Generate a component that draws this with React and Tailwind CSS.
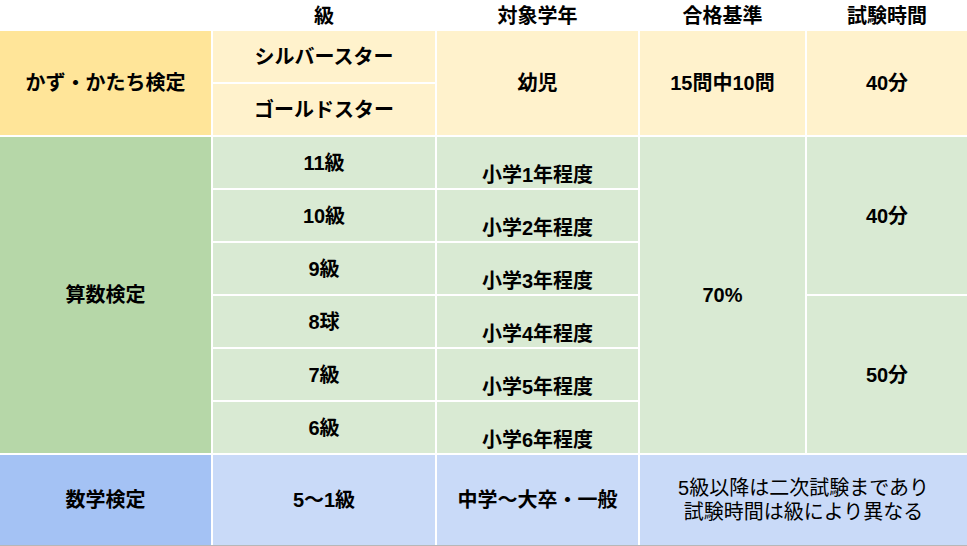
import React from "react";

const font = { fontFamily: '"Liberation Sans", "Noto Sans CJK JP", sans-serif' };

function Cell({ className = "", children }) {
  return (
    <div className={`flex items-center justify-center text-center text-[20px] leading-[24px] font-bold text-black ${className}`}>
      {children}
    </div>
  );
}

export default function App() {
  const grades = ["11級", "10級", "9級", "8球", "7級", "6級"];
  const rowStarts = [
    "row-start-4",
    "row-start-5",
    "row-start-6",
    "row-start-7",
    "row-start-8",
    "row-start-9",
  ];
  return (
    <div className="w-[967px] h-[546px] bg-white overflow-hidden" style={font}>
      <div className="border-b border-[#b7b7b7] bg-white">
        <div className="grid grid-cols-[211px_222px_201px_165px_160px] grid-rows-[29px_repeat(8,51px)_90px] gap-[2px] bg-white">
          {/* header */}
          <div className="col-start-1 row-start-1" />
          <Cell className="col-start-2 row-start-1 pt-[3px]">級</Cell>
          <Cell className="col-start-3 row-start-1 pt-[3px]">対象学年</Cell>
          <Cell className="col-start-4 row-start-1 pt-[3px]">合格基準</Cell>
          <Cell className="col-start-5 row-start-1 pt-[3px]">試験時間</Cell>

          {/* kazu */}
          <Cell className="col-start-1 row-start-2 row-span-2 bg-[#ffe599]">かず・かたち検定</Cell>
          <Cell className="col-start-2 row-start-2 bg-[#fff2cc]">シルバースター</Cell>
          <Cell className="col-start-2 row-start-3 bg-[#fff2cc]">ゴールドスター</Cell>
          <Cell className="col-start-3 row-start-2 row-span-2 bg-[#fff2cc]">幼児</Cell>
          <Cell className="col-start-4 row-start-2 row-span-2 bg-[#fff2cc]">15問中10問</Cell>
          <Cell className="col-start-5 row-start-2 row-span-2 bg-[#fff2cc]">40分</Cell>

          {/* sansu */}
          <Cell className="col-start-1 row-start-4 row-span-6 bg-[#b6d7a8]">算数検定</Cell>
          {grades.map((g, i) => (
            <Cell key={g} className={`col-start-2 ${rowStarts[i]} bg-[#d9ead3]`}>
              {g}
            </Cell>
          ))}
          {grades.map((g, i) => (
            <div
              key={"y" + i}
              className={`col-start-3 ${rowStarts[i]} bg-[#d9ead3] flex items-end justify-center pb-[1px] text-[20px] leading-[24px] font-bold text-black`}
            >
              {`小学${i + 1}年程度`}
            </div>
          ))}
          <Cell className="col-start-4 row-start-4 row-span-6 bg-[#d9ead3]">70%</Cell>
          <Cell className="col-start-5 row-start-4 row-span-3 bg-[#d9ead3]">40分</Cell>
          <Cell className="col-start-5 row-start-7 row-span-3 bg-[#d9ead3]">50分</Cell>

          {/* sugaku */}
          <Cell className="col-start-1 row-start-10 bg-[#a4c2f4]">数学検定</Cell>
          <Cell className="col-start-2 row-start-10 bg-[#c9daf8]">5〜1級</Cell>
          <Cell className="col-start-3 row-start-10 bg-[#c9daf8]">中学〜大卒・一般</Cell>
          <div className="col-start-4 col-span-2 row-start-10 bg-[#c9daf8] flex flex-col items-center justify-center text-[20px] leading-[24px] font-normal text-black text-center">
            <span>5級以降は二次試験まであり</span>
            <span>試験時間は級により異なる</span>
          </div>
        </div>
      </div>
    </div>
  );
}
